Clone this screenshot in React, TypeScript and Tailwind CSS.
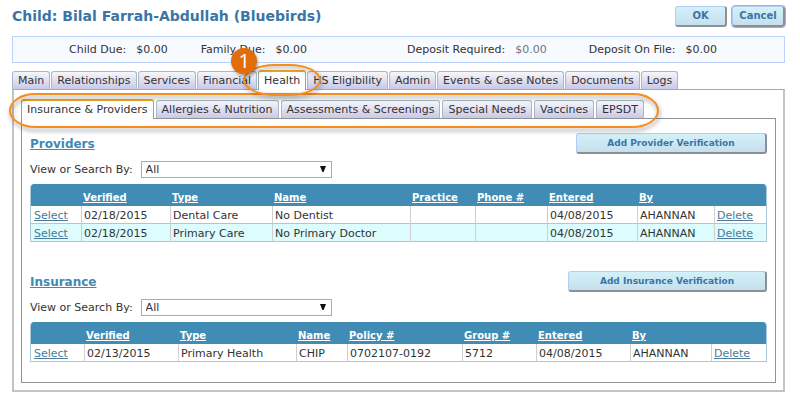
import { useState } from 'react';
import clsx from 'clsx';

const mainTabs = [
  'Main',
  'Relationships',
  'Services',
  'Financial',
  'Health',
  'HS Eligibility',
  'Admin',
  'Events & Case Notes',
  'Documents',
  'Logs',
];

const healthTabs = [
  'Insurance & Providers',
  'Allergies & Nutrition',
  'Assessments & Screenings',
  'Special Needs',
  'Vaccines',
  'EPSDT',
];

type Column = { label: string; width: string };

const providerColumns: Column[] = [
  { label: '', width: 'w-[50px]' },
  { label: 'Verified', width: 'w-[89px]' },
  { label: 'Type', width: 'w-[102px]' },
  { label: 'Name', width: 'w-[138px]' },
  { label: 'Practice', width: 'w-[65px]' },
  { label: 'Phone #', width: 'w-[72px]' },
  { label: 'Entered', width: 'w-[90px]' },
  { label: 'By', width: 'w-[77px]' },
  { label: '', width: 'w-[53px]' },
];

const providerRows = [
  ['02/18/2015', 'Dental Care', 'No Dentist', '', '', '04/08/2015', 'AHANNAN'],
  ['02/18/2015', 'Primary Care', 'No Primary Doctor', '', '', '04/08/2015', 'AHANNAN'],
];

const insuranceColumns: Column[] = [
  { label: '', width: 'w-[53px]' },
  { label: 'Verified', width: 'w-[94px]' },
  { label: 'Type', width: 'w-[118px]' },
  { label: 'Name', width: 'w-[51px]' },
  { label: 'Policy #', width: 'w-[115px]' },
  { label: 'Group #', width: 'w-[74px]' },
  { label: 'Entered', width: 'w-[94px]' },
  { label: 'By', width: 'w-[81px]' },
  { label: '', width: 'w-[56px]' },
];

const insuranceRows = [
  ['02/13/2015', 'Primary Health', 'CHIP', '0702107-0192', '5712', '04/08/2015', 'AHANNAN'],
];

const ActionButton = ({ children, className = '' }: { children: React.ReactNode; className?: string }) => {
  return (
    <button
      type="button"
      className={clsx(
        'h-[21px] rounded-[3px] border border-r-2 border-b-2 border-[#b5cdf5] border-r-[#8b9096] border-b-[#8b9096] bg-linear-to-b from-[#d3f1f8] to-[#c6dfed] font-bold text-[#3a75a5]',
        className
      )}
    >
      {children}
    </button>
  );
};

const TabList = ({
  tabs,
  active,
  onSelect,
  callout,
  className,
}: {
  tabs: string[];
  active: string;
  onSelect: (tab: string) => void;
  callout?: string;
  className: string;
}) => {
  return (
    <div role="tablist" className={clsx('flex items-end', className)}>
      {tabs.map((tab) => (
        <button
          key={tab}
          type="button"
          role="tab"
          aria-selected={tab === active}
          onClick={() => onSelect(tab)}
          className={clsx(
            'relative rounded-t-[3px] border border-b-0 px-[5px] whitespace-nowrap text-[#333]',
            tab === active
              ? '-mb-px h-5 border-t-2 border-[#8fa3ad] border-t-[#e9a628] bg-white'
              : 'h-[18px] border-[#a5bac4] bg-linear-to-b from-[#f6f6fc] to-[#c9c9e6]'
          )}
        >
          {tab}
          {tab === callout && (
            <>
              <span className="absolute -inset-x-4 -top-2 -bottom-1.5 z-10 rounded-[32px/50%] border-2 border-[#f88d1e] drop-shadow-[1px_2px_2px_rgba(0,0,0,0.4)]" />
              <span className="absolute -top-6 -left-7 z-20 flex size-[26px] items-center justify-center rounded-full bg-[#e36c0a] font-['Open_Sans',sans-serif] text-xl text-white shadow-[1px_2px_3px_rgba(0,0,0,0.35)]">
                1
              </span>
            </>
          )}
        </button>
      ))}
    </div>
  );
};

const RecordTable = ({ columns, rows }: { columns: Column[]; rows: string[][] }) => {
  return (
    <div className="mt-1.5 overflow-hidden rounded-t-[4px] border-x border-[#a9c8da]">
      <table className="w-full table-fixed border-separate border-spacing-0">
        <thead>
          <tr className="bg-[#408cb5]">
            {columns.map((col, i) => (
              <th
                key={i}
                className={clsx('pt-1.5 pl-0.5 text-left text-[10px] leading-4 font-bold text-white', col.width)}
              >
                {col.label && (
                  <a href="#" className="underline">
                    {col.label}
                  </a>
                )}
              </th>
            ))}
          </tr>
        </thead>
        <tbody>
          {rows.map((row, r) => (
            <tr key={r} className="odd:bg-white even:bg-[#dcfcfd]">
              <td className="border-b border-[#a9c8da] pt-0.5 pl-[3px] leading-[15px]">
                <a href="#" className="text-[#4a7a9c] underline">
                  Select
                </a>
              </td>
              {row.map((cell, c) => (
                <td
                  key={c}
                  className="border-b border-l border-[#cfcfcf] border-b-[#a9c8da] pt-0.5 pl-0.5 leading-[15px] whitespace-nowrap"
                >
                  {cell}
                </td>
              ))}
              <td className="border-b border-l border-[#cfcfcf] border-b-[#a9c8da] pt-0.5 pl-0.5 leading-[15px]">
                <a href="#" className="text-[#4a7a9c] underline">
                  Delete
                </a>
              </td>
            </tr>
          ))}
        </tbody>
      </table>
    </div>
  );
};

const RecordSection = ({
  title,
  action,
  actionWidth,
  columns,
  rows,
}: {
  title: string;
  action: string;
  actionWidth: string;
  columns: Column[];
  rows: string[][];
}) => {
  const filterId = `${title.toLowerCase()}-filter`;

  return (
    <section>
      <div className="flex items-center justify-between">
        <h2 className="text-xs leading-4 font-bold">
          <a href="#" className="text-[#3f8ab3] underline">
            {title}
          </a>
        </h2>
        <ActionButton className={clsx('text-[9px]', actionWidth)}>{action}</ActionButton>
      </div>
      <div className="mt-[7px] flex items-center gap-2">
        <label htmlFor={filterId}>View or Search By:</label>
        <div className="relative">
          <select
            id={filterId}
            className="block h-[17px] w-[191px] appearance-none border border-[#8ab5cd] bg-white pl-1 text-[11px] leading-[15px]"
          >
            <option>All</option>
          </select>
          <svg viewBox="0 0 6 6" className="pointer-events-none absolute top-[5px] right-1.5 size-1.5">
            <path d="M0 0h6L3.6 6H2.4z" fill="#111" />
          </svg>
        </div>
      </div>
      <RecordTable columns={columns} rows={rows} />
    </section>
  );
};

export default function App() {
  const [mainTab, setMainTab] = useState('Health');
  const [healthTab, setHealthTab] = useState('Insurance & Providers');

  return (
    <div className="bg-white pt-1.5 pr-[15px] pb-3 pl-3 font-['DejaVu_Sans',Verdana,sans-serif] text-[11px] leading-4 text-[#333]">
      <header className="flex items-start justify-between">
        <h1 className="text-sm leading-5 font-bold text-[#3a75a5]">Child: Bilal Farrah-Abdullah (Bluebirds)</h1>
        <div className="flex gap-[5px]">
          <ActionButton className="w-[52px] text-[10px]">OK</ActionButton>
          <ActionButton className="w-[53px] text-[10px] outline outline-[#8db4f0]">Cancel</ActionButton>
        </div>
      </header>

      <dl className="mt-[9px] flex h-[27px] items-center border border-[#bcd2fa] bg-[#f7faff] pl-14">
        <dt>Child Due:</dt>
        <dd className="ml-2.5">$0.00</dd>
        <dt className="ml-[33px]">Family Due:</dt>
        <dd className="ml-2.5">$0.00</dd>
        <dt className="ml-[100px]">Deposit Required:</dt>
        <dd className="ml-2.5 text-[#6c7681]">$0.00</dd>
        <dt className="ml-[42px]">Deposit On File:</dt>
        <dd className="ml-2.5">$0.00</dd>
      </dl>

      <div className="mt-[7px]">
        <TabList tabs={mainTabs} active={mainTab} onSelect={setMainTab} callout="Health" className="gap-px" />
        <main className="border-2 border-t border-[#c4c4c4] border-t-[#9fadb0] px-[7px] pt-[9px] pb-[7px]">
          <div className="relative">
            <TabList tabs={healthTabs} active={healthTab} onSelect={setHealthTab} className="gap-0.5" />
            <div className="border border-[#929292] px-2 pt-3.5 pb-5">
              <RecordSection
                title="Providers"
                action="Add Provider Verification"
                actionWidth="w-[191px]"
                columns={providerColumns}
                rows={providerRows}
              />
              <div className="mt-[29px]">
                <RecordSection
                  title="Insurance"
                  action="Add Insurance Verification"
                  actionWidth="w-[199px]"
                  columns={insuranceColumns}
                  rows={insuranceRows}
                />
              </div>
            </div>
            <span className="pointer-events-none absolute -top-1.5 -left-3 h-[35px] w-[650px] rounded-[26px/50%] border-2 border-[#f88d1e] drop-shadow-[1px_3px_2px_rgba(0,0,0,0.4)]" />
          </div>
        </main>
      </div>
    </div>
  );
}
